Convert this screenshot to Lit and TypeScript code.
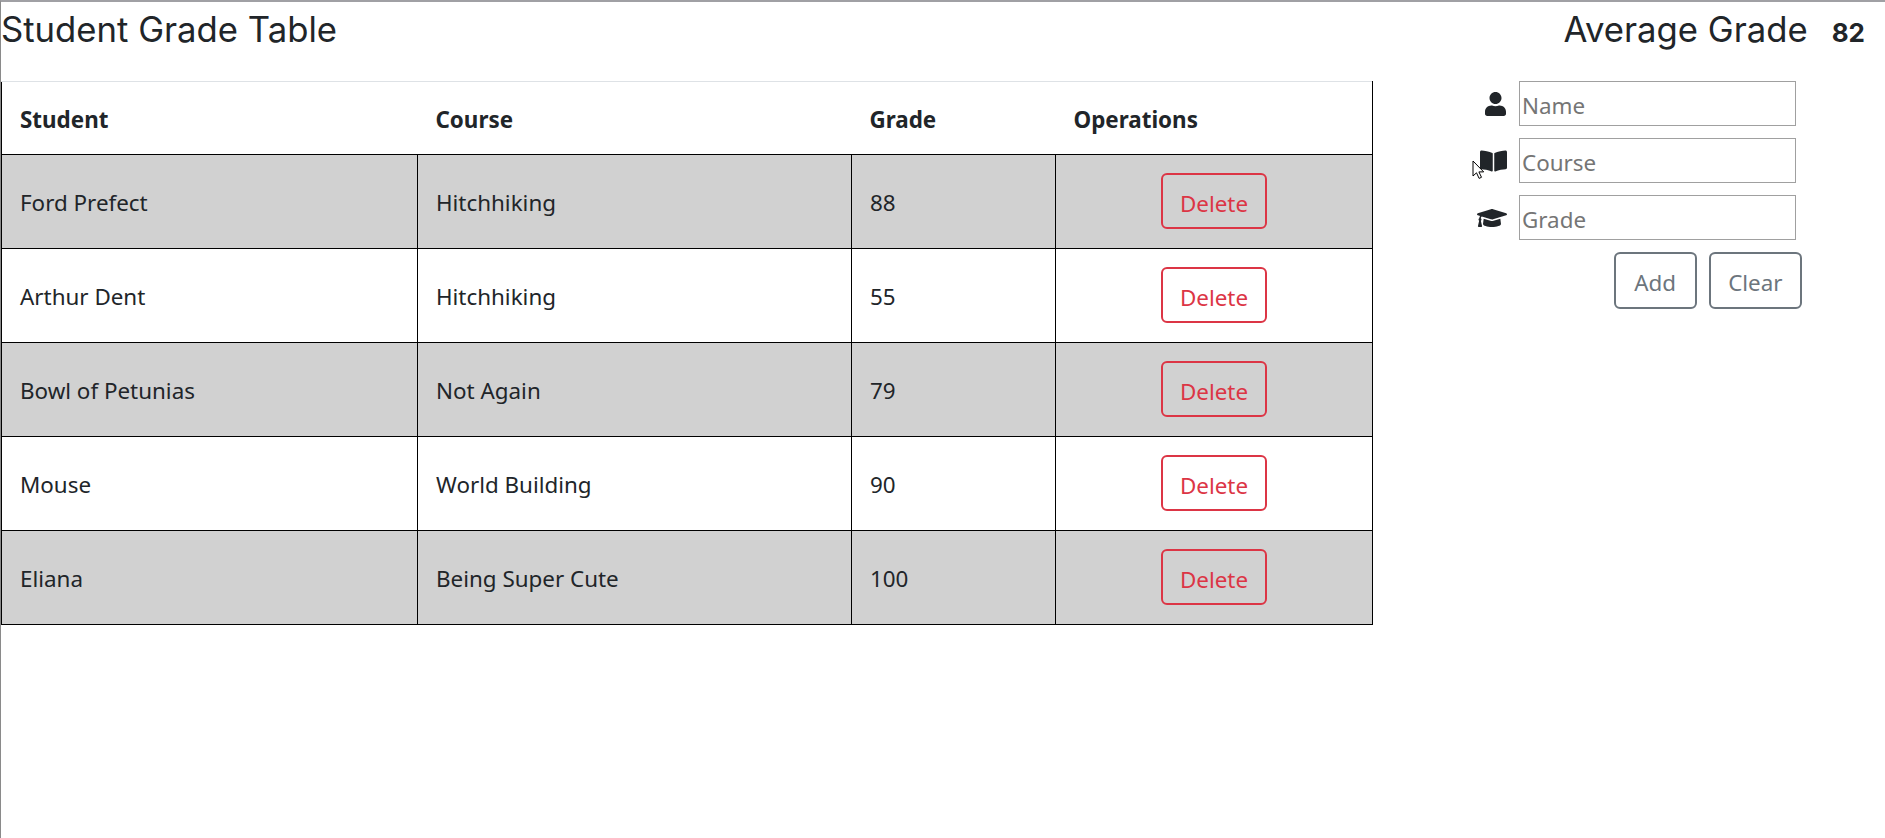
import { LitElement, html, css, svg } from "lit";
import { customElement } from "lit/decorators.js";

const rows = [
  ["Ford Prefect", "Hitchhiking", "88"],
  ["Arthur Dent", "Hitchhiking", "55"],
  ["Bowl of Petunias", "Not Again", "79"],
  ["Mouse", "World Building", "90"],
  ["Eliana", "Being Super Cute", "100"],
];

const userIcon = svg`<path d="M224 256c70.7 0 128-57.3 128-128S294.7 0 224 0 96 57.3 96 128s57.3 128 128 128zm89.6 32h-16.7c-22.2 10.2-46.9 16-72.9 16s-50.6-5.8-72.9-16h-16.7C60.2 288 0 348.2 0 422.4V464c0 26.5 21.5 48 48 48h352c26.5 0 48-21.5 48-48v-41.6c0-74.2-60.2-134.4-134.4-134.4z"/>`;
const bookIcon = svg`<path d="M542.22 32.05c-54.8 3.11-163.72 14.43-230.96 55.59-4.64 2.84-7.27 7.89-7.27 13.17v363.87c0 11.55 12.63 18.85 23.28 13.49 69.18-34.82 169.23-44.32 218.7-46.92 16.89-.89 30.02-14.43 30.02-30.66V62.75c.01-17.71-15.35-31.74-33.77-30.7zM264.73 87.64C197.5 46.48 88.58 35.17 33.78 32.05 15.36 31.01 0 45.04 0 62.75V400.6c0 16.24 13.13 29.78 30.02 30.66 49.49 2.6 149.59 12.11 218.77 46.95 10.62 5.35 23.21-1.94 23.21-13.46V100.63c0-5.29-2.62-10.14-7.27-12.99z"/>`;
const capIcon = svg`<path d="M622.34 153.2L343.4 67.5c-15.2-4.67-31.6-4.67-46.79 0L17.66 153.2c-23.54 7.23-23.54 38.36 0 45.59l48.63 14.94c-10.67 13.19-17.23 29.28-17.88 46.9C38.78 266.15 32 276.11 32 288c0 10.78 5.68 19.85 13.86 25.65L20.33 428.53C18.11 438.52 25.71 448 35.94 448h56.11c10.24 0 17.84-9.48 15.62-19.47L82.14 313.65C90.32 307.85 96 298.78 96 288c0-11.57-6.47-21.25-15.66-26.87.76-15.02 8.44-28.3 20.69-36.72L296.6 284.5c9.06 2.78 26.44 6.25 46.79 0l278.95-85.7c23.55-7.24 23.55-38.36 0-45.6zM352.79 315.09c-28.53 8.76-52.84 3.92-65.59 0l-145.02-44.55L128 384c0 35.35 85.96 64 192 64s192-28.65 192-64l-14.18-113.47-145.03 44.56z"/>`;

@customElement("app-root")
export class AppRoot extends LitElement {
  static styles = css`
    :host {
      display: block;
      box-sizing: border-box;
      height: 838px;
      border-top: 2px solid #a0a0a4;
      border-left: 1px solid #8a8a8a;
      color: #212529;
      font-family: "Noto Sans", sans-serif;
      font-size: 22.4px;
      position: relative;
      overflow: hidden;
      background: #fff;
    }
    * { box-sizing: border-box; }
    .top {
      display: flex;
      justify-content: space-between;
      align-items: flex-start;
      height: 79px;
      padding-right: 20px;
      padding-top: 4px;
    }
    h1 {
      margin: 0;
      font: 400 34.7px/46px Inter, sans-serif;
    }
    .avg { display: flex; gap: 24px; align-items: flex-start; }
    .avg b {
      font: 700 26px/46px Inter, sans-serif;
      padding-top: 4px;
    }
    .main { display: flex; align-items: flex-start; }
    table {
      border-collapse: collapse;
      table-layout: fixed;
      width: 1371px;
      flex: none;
      border-top: 1px solid #dee2e6;
    }
    th {
      text-align: left;
      height: 73px;
      padding: 2px 18px 0;
      font-weight: 700;
      border-bottom: 1px solid #000;
      border-top: 1px solid #dee2e6;
    }
    th:first-child { border-left: 1px solid #000; }
    th:last-child { border-right: 1px solid #000; }
    td {
      height: 94px;
      padding: 2px 18px 0;
      border: 1px solid #000;
    }
    tbody tr:nth-child(odd) td { background: #d1d1d1; }
    td.ops { text-align: center; padding: 0 18px 2px; }
    .btn {
      font: inherit;
      background: transparent;
      border-radius: 6px;
      height: 56px;
      border: 2px solid;
      padding: 7px 17px 0;
      line-height: 1;
    }
    .del { color: #dc3545; border-color: #dc3545; }
    .sec { color: #6c757d; border-color: #6c757d; height: 57px; padding: 6px 18.5px 0; }
    .sec.clear { padding: 6px 17.5px 0; }
    .form {
      display: flex;
      flex-direction: column;
      gap: 12px;
      margin-left: 104px;
      width: 326px;
    }
    .row { display: flex; gap: 12px; align-items: center; }
    .ico { width: 30px; height: 24px; display: flex; justify-content: flex-end; flex: none; }
    .ico svg { height: 24px; fill: #212529; display: block; }
    .ico.person { padding-right: 1px; }
    input {
      width: 277px;
      height: 45px;
      border: 1px solid #a0a0a0;
      padding: 4px 2px 0;
      font: inherit;
      outline: none;
    }
    input::placeholder { color: #757575; opacity: 1; }
    .btns { display: flex; gap: 12px; justify-content: flex-end; padding-right: 1px; }
    .cursor { position: absolute; left: 1471px; top: 158px; width: 14px; height: 20px; }
  `;

  render() {
    return html`
      <div class="top">
        <h1>Student Grade Table</h1>
        <div class="avg"><h1>Average Grade</h1><b>82</b></div>
      </div>
      <div class="main">
        <table>
          <colgroup>
            <col style="width:416px" /><col style="width:434px" /><col style="width:204px" /><col style="width:317px" />
          </colgroup>
          <thead>
            <tr><th>Student</th><th>Course</th><th>Grade</th><th>Operations</th></tr>
          </thead>
          <tbody>
            ${rows.map(
              (r) => html`<tr>
                <td>${r[0]}</td><td>${r[1]}</td><td>${r[2]}</td>
                <td class="ops"><button class="btn del">Delete</button></td>
              </tr>`
            )}
          </tbody>
        </table>
        <div class="form">
          <div class="row">
            <span class="ico person"><svg viewBox="0 0 448 512">${userIcon}</svg></span>
            <input placeholder="Name" />
          </div>
          <div class="row">
            <span class="ico"><svg viewBox="0 0 576 512">${bookIcon}</svg></span>
            <input placeholder="Course" />
          </div>
          <div class="row">
            <span class="ico"><svg viewBox="0 0 640 512">${capIcon}</svg></span>
            <input placeholder="Grade" />
          </div>
          <div class="btns">
            <button class="btn sec">Add</button>
            <button class="btn sec clear">Clear</button>
          </div>
        </div>
      </div>
      <svg class="cursor" viewBox="0 0 14 20">
        <path d="M1 1v15l3.5-3.2 2.6 5.6 2.4-1.1-2.6-5.4h4.8z" fill="#fff" stroke="#000" stroke-width="1" />
      </svg>
    `;
  }
}
